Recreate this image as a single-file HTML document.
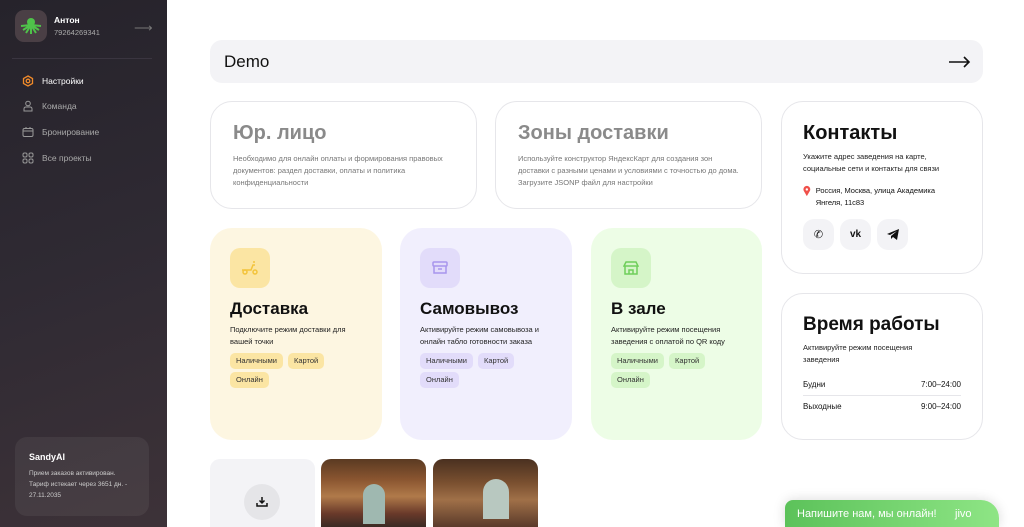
<!DOCTYPE html>
<html><head><meta charset="utf-8"><style>
*{box-sizing:border-box;margin:0;padding:0}
html,body{width:1024px;height:527px;overflow:hidden}
body{font-family:"Liberation Sans","Noto Sans CJK SC",sans-serif;background:#fff;position:relative;color:#111}
.sb{position:absolute;left:0;top:0;width:167px;height:527px;background:linear-gradient(160deg,#26232b 0%,#2f2a33 50%,#3d3238 100%)}
.abs{position:absolute}
.card{position:absolute;border:1px solid #e6e6ea;border-radius:22px;background:#fff}
.t1{font-size:20px;font-weight:bold;color:#8a8a8a}
.sm{font-size:7.5px;line-height:12px;color:#777}
.big{position:absolute;border-radius:22px;padding:20px}
.ic{width:40px;height:40px;border-radius:10px;display:flex;align-items:center;justify-content:center}
.h{font-size:17px;font-weight:bold;margin-top:11px;color:#111}
.d{font-size:7.5px;line-height:12px;margin-top:5px;color:#222}
.tags{margin-top:5px;display:flex;flex-wrap:wrap;gap:3px 5px;width:135px}
.tag{font-size:7.5px;padding:3px 6px;border-radius:5px;color:#333;line-height:10px}
.nav{position:absolute;left:22px;font-size:8.5px;color:#aaa;display:flex;align-items:center;gap:8px}
</style></head><body>
<div class="sb">
 <div class="abs" style="left:15px;top:10px;width:32px;height:32px;border-radius:9px;background:#4a3f45;display:flex;align-items:center;justify-content:center">
  <svg width="22" height="20" viewBox="0 0 22 20"><circle cx="11" cy="6" r="4" fill="#4fc24a"/><path d="M11 9 L3 14 M11 9 L6 17 M11 9 L11 18 M11 9 L16 17 M11 9 L19 14 M11 9 L1 10 M11 9 L21 10" stroke="#4fc24a" stroke-width="2"/></svg></div>
 <div class="abs" style="left:54px;top:15px;font-size:8.5px;font-weight:bold;color:#fff">Антон</div>
 <div class="abs" style="left:54px;top:28px;font-size:7.5px;color:#aaa">79264269341</div>
 <div class="abs" style="left:134px;top:20px;color:#777;font-size:13px">⟶</div>
 <div class="abs" style="left:12px;top:58px;width:140px;height:1px;background:#3a3540"></div>
 <div class="nav" style="top:75px;color:#fff"><svg width="12" height="12" viewBox="0 0 12 12"><path d="M6 1 L10.5 3.5 V8.5 L6 11 L1.5 8.5 V3.5Z" fill="none" stroke="#f08a2a" stroke-width="1.3"/><circle cx="6" cy="6" r="1.8" fill="none" stroke="#f08a2a" stroke-width="1.3"/></svg>Настройки</div>
 <div class="nav" style="top:100px"><svg width="12" height="12" viewBox="0 0 12 12"><circle cx="6" cy="3.5" r="2.3" fill="none" stroke="#999"/><path d="M2 11 V9 Q2 7 4 7 H8 Q10 7 10 9 V11Z" fill="none" stroke="#999"/></svg>Команда</div>
 <div class="nav" style="top:126px"><svg width="12" height="12" viewBox="0 0 12 12"><rect x="1" y="2.5" width="10" height="8" rx="1.5" fill="none" stroke="#999"/><path d="M1 5H11M4 1V3M8 1V3" stroke="#999"/></svg>Бронирование</div>
 <div class="nav" style="top:152px"><svg width="12" height="12" viewBox="0 0 12 12"><g fill="none" stroke="#999"><rect x="1" y="1" width="4" height="4" rx="1.5"/><rect x="7" y="1" width="4" height="4" rx="1.5"/><rect x="1" y="7" width="4" height="4" rx="1.5"/><rect x="7" y="7" width="4" height="4" rx="1.5"/></g></svg>Все проекты</div>
 <div class="abs" style="left:15px;top:437px;width:134px;height:79px;border-radius:12px;background:rgba(255,255,255,0.06);padding:15px 14px">
  <div style="font-size:9px;font-weight:bold;color:#fff">SandyAI</div>
  <div style="font-size:6.5px;line-height:11px;color:#ccc;margin-top:6px">Прием заказов активирован.<br>Тариф истекает через 3651 дн. -<br>27.11.2035</div>
 </div>
</div>

<div class="abs" style="left:210px;top:40px;width:773px;height:43px;border-radius:12px;background:#f3f3f6;display:flex;align-items:center;justify-content:space-between;padding:0 12px 0 14px">
 <span style="font-size:17px;font-weight:500">Demo</span>
 <svg width="22" height="12" viewBox="0 0 22 12"><path d="M0 6H20M15 1L20 6L15 11" fill="none" stroke="#111" stroke-width="1.6"/></svg>
</div>

<div class="card" style="left:210px;top:101px;width:267px;height:108px;padding:20px 22px">
 <div class="t1">Юр. лицо</div>
 <div class="sm" style="margin-top:8px">Необходимо для онлайн оплаты и формирования правовых документов: раздел доставки, оплаты и политика конфиденциальности</div>
</div>
<div class="card" style="left:495px;top:101px;width:267px;height:108px;padding:20px 22px">
 <div class="t1">Зоны доставки</div>
 <div class="sm" style="margin-top:8px">Используйте конструктор ЯндексКарт для создания зон доставки с разными ценами и условиями с точностью до дома. Загрузите JSONP файл для настройки</div>
</div>
<div class="card" style="left:781px;top:101px;width:202px;height:173px;padding:20px 21px">
 <div style="font-size:20px;font-weight:bold">Контакты</div>
 <div style="font-size:7.5px;line-height:12px;margin-top:6px;color:#222">Укажите адрес заведения на карте, социальные сети и контакты для связи</div>
 <div style="display:flex;gap:5px;margin-top:10px;font-size:7.5px;line-height:12px"><svg width="9" height="12" viewBox="0 0 9 12"><path d="M4.5 12 L1 6 A4 4 0 1 1 8 6Z" fill="#f0504a"/><circle cx="4.5" cy="4.2" r="1.4" fill="#fff"/></svg><span>Россия, Москва, улица Академика Янгеля, 11с83</span></div>
 <div style="display:flex;gap:6px;margin-top:10px">
  <div style="width:31px;height:31px;border-radius:11px;background:#f3f3f6;display:flex;align-items:center;justify-content:center;font-size:11px">✆</div>
  <div style="width:31px;height:31px;border-radius:11px;background:#f3f3f6;display:flex;align-items:center;justify-content:center;font-size:10px;font-weight:bold">vk</div>
  <div style="width:31px;height:31px;border-radius:11px;background:#f3f3f6;display:flex;align-items:center;justify-content:center"><svg width="12" height="11" viewBox="0 0 12 11"><path d="M0 5 L12 0 L10 11 L6 8 L4 10 L4 7 L10 2 L3 6Z" fill="#111"/></svg></div>
 </div>
</div>

<div class="big" style="left:210px;top:228px;width:172px;height:212px;background:#fdf6e1">
 <div class="ic" style="background:#fbe5a3"><svg width="18" height="14" viewBox="0 0 18 14"><g fill="none" stroke="#f3c43c" stroke-width="1.5"><circle cx="4" cy="11" r="2"/><circle cx="14" cy="11" r="2"/><path d="M1 9 H10 L12 4 H14 M12 1 H14"/></g></svg></div>
 <div class="h">Доставка</div>
 <div class="d">Подключите режим доставки для вашей точки</div>
 <div class="tags"><span class="tag" style="background:#fbe5a3">Наличными</span><span class="tag" style="background:#fbe5a3">Картой</span><span class="tag" style="background:#fbe5a3">Онлайн</span></div>
</div>
<div class="big" style="left:400px;top:228px;width:172px;height:212px;background:#f1effd">
 <div class="ic" style="background:#e2dcfa"><svg width="16" height="14" viewBox="0 0 16 14"><g fill="none" stroke="#a895ec" stroke-width="1.5"><rect x="1" y="1" width="14" height="4" rx="1"/><path d="M2 5 V12 H14 V5 M6 8 H10"/></g></svg></div>
 <div class="h">Самовывоз</div>
 <div class="d">Активируйте режим самовывоза и онлайн табло готовности заказа</div>
 <div class="tags"><span class="tag" style="background:#e2dcfa">Наличными</span><span class="tag" style="background:#e2dcfa">Картой</span><span class="tag" style="background:#e2dcfa">Онлайн</span></div>
</div>
<div class="big" style="left:591px;top:228px;width:171px;height:212px;background:#edfde6">
 <div class="ic" style="background:#d5f5c8"><svg width="16" height="14" viewBox="0 0 16 14"><g fill="none" stroke="#6fcf5a" stroke-width="1.5"><path d="M1 5 L3 1 H13 L15 5 Z M2 5 V13 H14 V5 M6 13 V9 H10 V13"/></g></svg></div>
 <div class="h">В зале</div>
 <div class="d">Активируйте режим посещения заведения с оплатой по QR коду</div>
 <div class="tags"><span class="tag" style="background:#d5f5c8">Наличными</span><span class="tag" style="background:#d5f5c8">Картой</span><span class="tag" style="background:#d5f5c8">Онлайн</span></div>
</div>

<div class="card" style="left:781px;top:293px;width:202px;height:147px;padding:20px 21px">
 <div style="font-size:19px;font-weight:bold">Время работы</div>
 <div style="font-size:7.5px;line-height:12px;margin-top:6px;color:#222;width:130px">Активируйте режим посещения заведения</div>
 <div style="display:flex;justify-content:space-between;font-size:8px;margin-top:14px;padding-bottom:6px;border-bottom:1px solid #e6e6ea"><span>Будни</span><span>7:00–24:00</span></div>
 <div style="display:flex;justify-content:space-between;font-size:8px;margin-top:6px"><span>Выходные</span><span>9:00–24:00</span></div>
</div>

<div class="abs" style="left:210px;top:459px;width:105px;height:68px;border-radius:10px 10px 0 0;background:#f3f3f6"><div style="position:absolute;left:34px;top:25px;width:36px;height:36px;border-radius:50%;background:#e5e5e8;display:flex;align-items:center;justify-content:center"><svg width="12" height="12" viewBox="0 0 12 12"><path d="M6 1V7M3.5 4.5L6 7L8.5 4.5M1 7V10H11V7" fill="none" stroke="#111" stroke-width="1.5"/></svg></div></div>
<div class="abs" style="left:321px;top:459px;width:105px;height:68px;border-radius:10px 10px 0 0;background:linear-gradient(180deg,#5a3a22 0%,#8a5530 30%,#b07a4a 55%,#6a3a2a 80%,#3a2a24 100%)"><div style="position:absolute;left:42px;top:25px;width:22px;height:40px;border-radius:11px 11px 0 0;background:#9fb8b0"></div></div>
<div class="abs" style="left:433px;top:459px;width:105px;height:68px;border-radius:10px 10px 0 0;background:linear-gradient(180deg,#4a3020 0%,#7a5030 35%,#a07048 60%,#5a3a2a 100%)"><div style="position:absolute;left:50px;top:20px;width:26px;height:40px;border-radius:13px 13px 0 0;background:#b8c8c0"></div></div>

<div class="abs" style="left:785px;top:500px;width:214px;height:27px;border-radius:8px 18px 0 0;background:linear-gradient(90deg,#5cc25a,#8ee585);color:#fff;font-size:11px;padding:8px 12px;box-shadow:0 0 12px rgba(0,0,0,0.15)">Напишите нам, мы онлайн!<span style="position:absolute;left:170px;top:8px">jivo</span></div>
</body></html>
